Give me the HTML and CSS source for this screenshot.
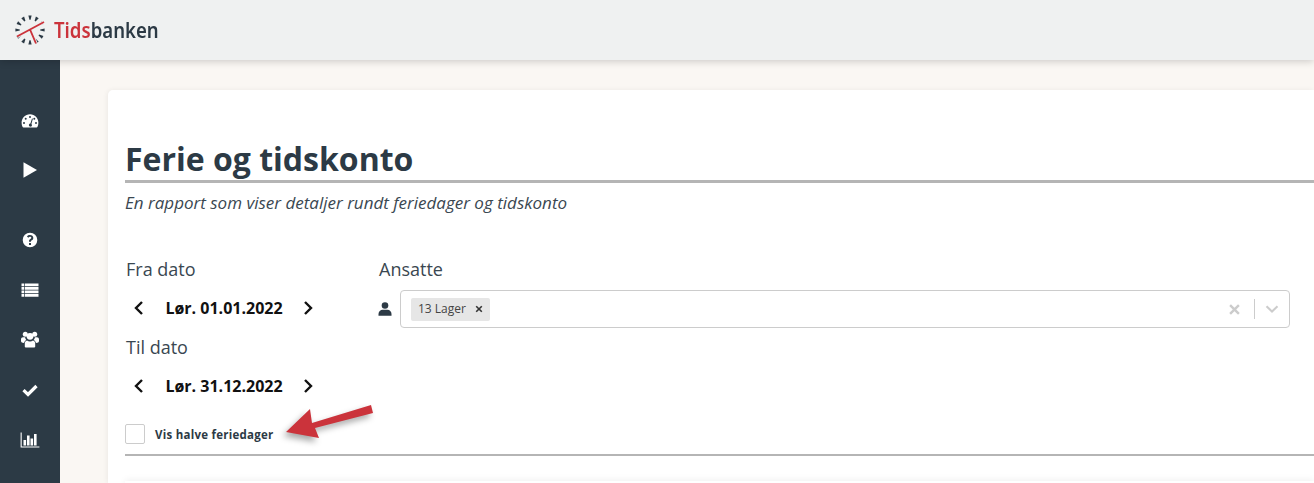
FILE: index.html
```html
<!DOCTYPE html>
<html lang="no">
<head>
<meta charset="utf-8">
<title>Ferie og tidskonto</title>
<link rel="stylesheet" href="styles.css">
</head>
<body>
<header class="topbar">
  <svg class="logo-mark" viewBox="0 0 32 32" width="32" height="32">
    <defs><path id="tick" d="M14.400 1.400 L17.600 1.400 L16.600 5.800 L15.400 5.800Z"/></defs>
    <g fill="#2c3a45">
      <use href="#tick"/>
      <use href="#tick" transform="rotate(30 16 16)"/>
      <use href="#tick" transform="rotate(60 16 16)"/>
      <use href="#tick" transform="rotate(90 16 16)"/>
      <use href="#tick" transform="rotate(120 16 16)"/>
      <use href="#tick" transform="rotate(150 16 16)"/>
      <use href="#tick" transform="rotate(180 16 16)"/>
      <use href="#tick" transform="rotate(210 16 16)"/>
      <use href="#tick" transform="rotate(240 16 16)"/>
      <use href="#tick" transform="rotate(270 16 16)"/>
      <use href="#tick" transform="rotate(300 16 16)"/>
      <use href="#tick" transform="rotate(330 16 16)"/>
    </g>
    <path d="M3 22.500 L30 8 M16 15.500 L22 29.500" stroke="#eff1f1" stroke-width="3.400" fill="none"/>
    <path d="M3 22.500 L30 8 M16 15.500 L22 29.500" stroke="#cb333b" stroke-width="1.900" fill="none"/>
  </svg>
  <span class="logo-text"><span class="logo-red">Tids</span>banken</span>
</header>
<div class="layout">
  <nav class="sidebar">
    <svg class="nav-icon" viewBox="0 0 18 18"><path fill="#fff" fill-rule="evenodd" d="M9 2.200C4.200 2.200.6 6 .6 10.800c0 1.500.3 2.900 1 4.100.2.300.4.500.8.500h13.200c.4 0 .6-.2.800-.5.700-1.200 1-2.600 1-4.100C17.400 6 13.800 2.200 9 2.200zM9 4a1 1 0 1 1 0 2 1 1 0 0 1 0-2zM4.700 5.800a1 1 0 1 1 0 2 1 1 0 0 1 0-2zM13.300 5.800a1 1 0 1 1 0 2 1 1 0 0 1 0-2zM3 10a1 1 0 1 1 0 2 1 1 0 0 1 0-2zM15 10a1 1 0 1 1 0 2 1 1 0 0 1 0-2zM11 6.500l.9.300-1.500 5.300c.5.500.7 1 .5 1.600-.3.800-1.200 1.200-2 .9-.8-.3-1.200-1.200-.9-2 .2-.6.700-1 1.400-1z"/></svg>
    <svg class="nav-icon gap-a" viewBox="0 0 18 18"><path fill="#fff" d="M2.500 1.200 L16 9 L2.500 16.800Z"/></svg>
    <svg class="nav-icon gap-b" viewBox="0 0 18 18"><path fill="#fff" fill-rule="evenodd" d="M9 1.700a7.300 7.300 0 1 0 0 14.600A7.300 7.300 0 0 0 9 1.700zM8 12.100h2v1.900H8zM9 4.100c1.900 0 3.300 1.100 3.300 2.800 0 1.200-.7 1.900-1.500 2.400-.6.400-.8.600-.8 1.100v.4H8v-.6c0-1.100.6-1.700 1.300-2.200.6-.4 1-.7 1-1.200 0-.6-.6-1-1.300-1-.7 0-1.200.3-1.700 1L6 5.500C6.700 4.600 7.700 4.100 9 4.100z"/></svg>
    <svg class="nav-icon gap-c" viewBox="0 0 18 18"><path fill="#fff" d="M.5 2.500h2.600v2.800H.5zM3.800 2.500h13.700v2.800H3.800zM.5 6h2.600v2.800H.5zM3.800 6h13.700v2.800H3.800zM.5 9.500h2.600v2.800H.5zM3.800 9.500h13.700v2.800H3.800zM.5 13h2.600v2.800H.5zM3.800 13h13.700v2.800H3.800z"/></svg>
    <svg class="nav-icon gap-c" viewBox="0 0 18 18"><g fill="#fff"><circle cx="4.300" cy="3.300" r="2.500"/><circle cx="13.700" cy="3.300" r="2.500"/><circle cx="9" cy="5.300" r="3.400"/><path d="M0 8.500c0-1.400.9-2.200 2-2.200h2.100c.1 1 .5 1.900 1.200 2.600-1.200.6-2 1.700-2.200 3.100C1.100 12 0 11.200 0 10zM18 8.500c0-1.400-.9-2.200-2-2.200h-2.100c-.1 1-.5 1.900-1.200 2.600 1.200.6 2 1.700 2.200 3.100 2 0 3.100-.8 3.100-2z"/><path d="M6 9.400c.8.600 1.900 1 3 1s2.200-.4 3-1c1.300.3 2.200 1.500 2.200 3v3c0 .7-.6 1.200-1.300 1.200H5.100c-.7 0-1.300-.5-1.300-1.200v-3c0-1.500.9-2.700 2.200-3z"/></g></svg>
    <svg class="nav-icon gap-c" viewBox="0 0 18 18"><path fill="none" stroke="#fff" stroke-width="3.200" d="M2.500 9.200 L7 13.500 L15.500 5"/></svg>
    <svg class="nav-icon wide gap-c" viewBox="0 0 20 18"><path fill="#fff" d="M.6 1.500h1.100v14h17.700v1.100H.6zM3.500 9h2.600v5.500H3.500zM7 4.500h2.600v10H7zM10.500 7.500h2.600v7h-2.600zM14 3h2.600v11.500H14z"/></svg>
  </nav>
  <main class="content">
    <section class="card">
      <h1 class="title">Ferie og tidskonto</h1>
      <p class="subtitle">En rapport som viser detaljer rundt feriedager og tidskonto</p>
      <div class="filters">
        <div class="dates">
          <label class="label">Fra dato</label>
          <div class="stepper">
            <svg class="chev" viewBox="0 0 12 16"><path d="M9 2 L3 8 L9 14" /></svg>
            <span class="date">Lør. 01.01.2022</span>
            <svg class="chev" viewBox="0 0 12 16"><path d="M3 2 L9 8 L3 14" /></svg>
          </div>
          <label class="label">Til dato</label>
          <div class="stepper">
            <svg class="chev" viewBox="0 0 12 16"><path d="M9 2 L3 8 L9 14" /></svg>
            <span class="date">Lør. 31.12.2022</span>
            <svg class="chev" viewBox="0 0 12 16"><path d="M3 2 L9 8 L3 14" /></svg>
          </div>
        </div>
        <div class="employees">
          <label class="label">Ansatte</label>
          <div class="employee-row">
            <svg class="person" viewBox="0 0 14 14"><circle cx="7" cy="3.500" r="3.300" fill="#2c3a45"/><path fill="#2c3a45" d="M.5 13.800v-1.900C.5 9.500 2.500 7.800 4.500 7.800h5c2 0 4 1.700 4 4.100v1.900z"/></svg>
            <div class="select">
              <span class="tag">13 Lager<svg class="tag-x" viewBox="0 0 8 8"><path d="M1.200 1.200 L6.800 6.800 M6.800 1.200 L1.200 6.800"/></svg></span>
              <span class="select-tools">
                <svg class="clear" viewBox="0 0 10 10"><path d="M1 1 L9 9 M9 1 L1 9"/></svg>
                <span class="divider"></span>
                <svg class="drop" viewBox="0 0 14 8"><path d="M1.500 1.200 L7 6.500 L12.500 1.200"/></svg>
              </span>
            </div>
          </div>
        </div>
      </div>
      <div class="check-row">
        <span class="checkbox"></span>
        <span class="check-label">Vis halve feriedager</span>
      </div>
      <hr class="rule">
      <div class="next-section"></div>
    </section>
  </main>
</div>
<svg class="arrow" viewBox="0 0 100 50" width="100" height="50"><path fill="#cb333b" d="M5 32 L29 9 L31 23 L90 5 L92 13 L34 28 L38 38Z"/></svg>
</body>
</html>
```
FILE: styles.css
```css
* { box-sizing: border-box; }
html, body { margin: 0; padding: 0; height: 100%; overflow: hidden; }
body { font-family: "Open Sans", sans-serif; color: #2c3a45; background: #faf7f3; position: relative; }

.topbar { height: 60px; background: #eff1f1; display: flex; align-items: center; padding-left: 14px; gap: 8px; box-shadow: 0 1px 8px rgba(0,0,0,.2); position: relative; z-index: 2; }
.logo-mark { display: block; margin-top: -1px; }
.logo-text { font-family: "Noto Sans", sans-serif; font-weight: 600; font-size: 21px; line-height: 1; color: #2c3a45; margin-top: 1px; transform: scaleX(.885); transform-origin: left center; }
.logo-red { color: #cb333b; }

.layout { display: flex; height: 423px; }
.sidebar { width: 60px; flex: none; background: #2c3a45; display: flex; flex-direction: column; align-items: center; padding-top: 52px; }
.nav-icon { display: block; width: 18px; height: 18px; flex: none; }
.nav-icon.gap-a { margin-top: 31px; }
.nav-icon.gap-b { margin-top: 52px; }
.nav-icon.gap-c { margin-top: 32px; }
.nav-icon.wide { width: 20px; }

.content { flex: 1; min-width: 0; padding: 30px 0 0 48px; }
.card { background: #fff; border-radius: 5px 0 0 0; padding: 50px 0 0 17px; height: 393px; box-shadow: -1px 0 5px rgba(0,0,0,.06); overflow: hidden; }
.title { margin: 0; font-size: 32px; font-weight: 700; line-height: 38px; border-bottom: 3px solid #b5b5b5; padding-bottom: 2px; }
.subtitle { margin: 9px 0 0; font-size: 17px; font-style: italic; line-height: 22px; color: #3a4751; }

.filters { display: flex; margin-top: 43px; }
.dates { width: 254px; flex: none; }
.dates .label { padding-left: 1px; }
.label { display: block; font-size: 18px; line-height: 24px; color: #3a4751; }
.stepper { display: flex; align-items: center; height: 38px; padding-left: 8px; margin-top: 8px; margin-bottom: 8px; }
.chev { width: 12px; height: 16px; flex: none; fill: none; stroke: #111; stroke-width: 2.400; }
.date { width: 157px; padding-left: 1px; text-align: center; font-size: 16px; font-weight: 700; color: #111; }

.employees { flex: none; width: 911px; }
.employee-row { display: flex; align-items: center; margin-top: 9px; gap: 14px; }
.person { width: 14px; height: 14px; flex: none; margin-left: -1px; margin-right: 1px; display: block; }
.select { flex: 1; min-width: 0; height: 38px; border: 1px solid #ccc; border-radius: 4px; background: #fff; display: flex; align-items: center; padding: 0 10px; justify-content: space-between; margin-left: -7px; }
.tag { display: inline-flex; align-items: center; height: 23px; background: #e6e6e6; border-radius: 2px; padding: 0 7px 2px; font-size: 12px; color: #444; gap: 9px; }
.tag-x { width: 8px; height: 8px; stroke: #333; stroke-width: 1.600; fill: none; margin-top: 2px; }
.select-tools { display: flex; align-items: center; gap: 14px; }
.clear { width: 11px; height: 11px; stroke: #ccc; stroke-width: 2.200; fill: none; }
.divider { width: 1px; height: 20px; background: #ccc; margin-right: -4px; }
.drop { width: 14px; height: 8px; stroke: #ccc; stroke-width: 2; fill: none; }

.check-row { display: flex; align-items: center; margin-top: 11px; gap: 10px; height: 20px; }
.checkbox { width: 20px; height: 20px; border: 1px solid #ccc; border-radius: 2px; background: #fff; }
.check-label { font-size: 11.500px; font-weight: 700; color: #2c3a45; letter-spacing: .25px; }
.rule { margin: 10px 0 0; border: 0; border-top: 2px solid #b5b5b5; }
.next-section { margin-top: 25px; height: 10px; box-shadow: 0 -2px 6px rgba(0,0,0,.05); }

.arrow { position: absolute; left: 281px; top: 400px; filter: drop-shadow(-3px 4px 3px rgba(0,0,0,.35)); z-index: 5; }
```
